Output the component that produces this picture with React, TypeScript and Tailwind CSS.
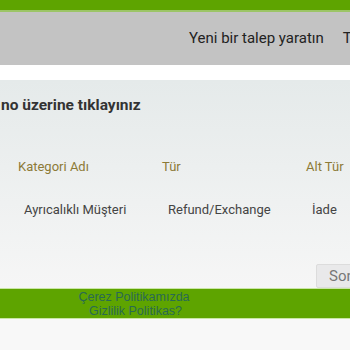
import React from "react";

export default function App() {
  return (
    <div className="w-[350px] h-[350px] overflow-hidden bg-[#f8f8f8]" style={{ fontFamily: "Roboto, 'Liberation Sans', sans-serif" }}>
      <div className="h-[10px] bg-[#5ea400]" />
      <div className="h-[2px] bg-[#9cc566]" />
      <div className="h-[53px] bg-[#c3c3c3] flex items-center pl-[189px] whitespace-nowrap overflow-hidden text-[15px] text-[#222]">
        <span>Yeni bir talep yaratın</span>
        <span className="ml-[19px]">Taleplerim</span>
      </div>
      <div className="h-[15px] bg-white" />
      <div className="h-[208px] bg-gradient-to-b from-[#e5eaea] to-[#f6f6f6] flex flex-col overflow-hidden">
        <div className="mt-[13px] pl-[1px] text-[15.5px] leading-[24px] font-bold text-[#333] whitespace-nowrap">
          no üzerine tıklayınız
        </div>
        <div className="mt-[40px] grid grid-cols-[144px_144px_144px] pl-[18px] text-[13px] leading-[20px] text-[#8c7a37] whitespace-nowrap">
          <div>Kategori Adı</div>
          <div>Tür</div>
          <div>Alt Tür</div>
        </div>
        <div className="mt-[23px] grid grid-cols-[144px_144px_144px] pl-[24px] text-[13px] leading-[20px] text-[#444] whitespace-nowrap">
          <div>Ayrıcalıklı Müşteri</div>
          <div>Refund/Exchange</div>
          <div>İade</div>
        </div>
        <div className="mt-[44px] flex pl-[316px]">
          <div className="h-[24px] w-[80px] shrink-0 bg-[#e9e9ea] border border-[#dcdcdc] rounded-[2px] pl-[12px] text-[15px] leading-[22px] text-[#777] whitespace-nowrap">
            Sonraki
          </div>
        </div>
      </div>
      <div className="h-[1px] bg-[#c9e6a5]" />
      <div className="h-[29px] bg-[#5ea400] flex">
        <div
          className="ml-[70px] w-[128px] text-center text-[12.5px] leading-[14px] text-[#2a6a52] pt-[1px]"
          style={{ fontFamily: "'Liberation Sans', Arial, sans-serif" }}
        >
          <div>Çerez Politikamızda</div>
          <div className="pl-[3px]">Gizlilik Politikas?</div>
        </div>
      </div>
      <div className="h-[1px] bg-[#c9e6a5]" />
    </div>
  );
}
